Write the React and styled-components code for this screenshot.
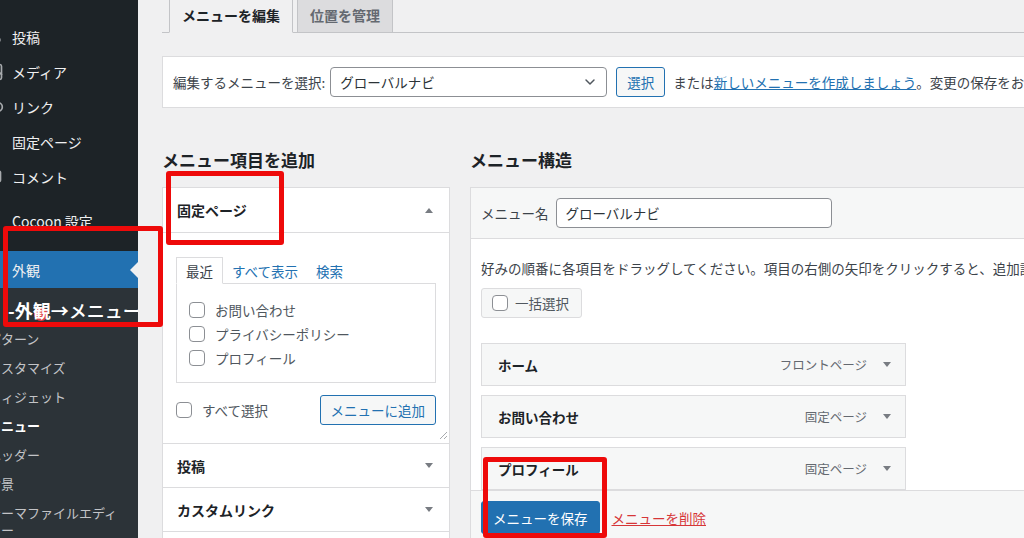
import React from "react"
import styled, { createGlobalStyle, css } from "styled-components"
import { Pin, Image, Link2, File, MessageSquare, ChevronDown } from "lucide-react"

const GlobalStyle = createGlobalStyle`
  html, body {
    margin: 0;
    padding: 0;
  }
  body {
    background: #f0f0f1;
    font-family: "Noto Sans CJK JP", "Noto Sans", sans-serif;
    font-size: 13.5px;
    color: #3c434a;
    overflow: hidden;
  }
  * {
    box-sizing: border-box;
  }
`

const Page = styled.div`
  position: relative;
  display: flex;
  width: 1024px;
  height: 538px;
  overflow: hidden;
`

/* ---------- admin sidebar ---------- */

const Sidebar = styled.nav`
  position: relative;
  flex: 0 0 138px;
  height: 100%;
  background: #1d2327;
  overflow: hidden;
`

// the screenshot is cropped on the left, so the menu sits 24px outside
const MenuList = styled.ul`
  width: 162px;
  margin: 0 0 0 -24px;
  padding: 19px 0 0;
  list-style: none;
`

const MenuItem = styled.li`
  position: relative;
  display: flex;
  align-items: center;
  height: ${p => (p.$current ? 37 : 35)}px;
  font-size: 14px;
  color: #f0f0f1;
  background: ${p => (p.$current ? "#2271b1" : "transparent")};
  white-space: nowrap;

  ${p =>
    p.$current &&
    css`
      &::after {
        content: "";
        position: absolute;
        right: 0;
        top: 50%;
        margin-top: -8px;
        border: 8px solid transparent;
        border-right-color: #f0f0f1;
        border-left-width: 0;
      }
    `}
`

const MenuIcon = styled.span`
  flex: 0 0 36px;
  display: flex;
  justify-content: center;
  color: #a7aaad;
`

const Separator = styled.li`
  height: ${p => p.$h}px;
`

const SubMenu = styled.ul`
  margin: 0;
  padding: 6px 0 8px;
  list-style: none;
  background: #2c3338;
`

const SubItem = styled.li`
  padding: 6px 12px;
  line-height: 17px;
  font-size: 13px;
  color: ${p => (p.$current ? "#ffffff" : "#c3c4c7")};
  font-weight: ${p => (p.$current ? 700 : 400)};
`

// hand-written note laid over the first sub item
const CalloutItem = styled.li`
  position: relative;
  display: flex;
  align-items: center;
  height: 30px;
  padding: 2px 0 0 32px;
  color: #fff;
  font-size: 18px;
  font-weight: 700;
  white-space: nowrap;
`

const CalloutDot = styled.span`
  position: absolute;
  left: 58px;
  top: 13px;
  width: 14px;
  height: 14px;
  border-radius: 50%;
  background: #e0474c;
`

const CalloutText = styled.span`
  position: relative;
  font-weight: ${p => (p.$light ? 500 : 700)};
`

/* ---------- main area ---------- */

const Main = styled.main`
  flex: 1;
  min-width: 0;
  overflow: hidden;
  padding-left: 24px;
`

const Wrap = styled.div`
  width: 1100px;
`

const TabBar = styled.div`
  display: flex;
  align-items: flex-end;
  gap: 4px;
  height: 37px;
  margin-top: -4px;
  padding-left: 7px;
  border-bottom: 1px solid #c3c4c7;
`

const Tab = styled.div`
  height: 37px;
  margin-bottom: -1px;
  padding: 0 12px;
  display: flex;
  align-items: center;
  font-size: 14px;
  font-weight: 700;
  border: 1px solid #c3c4c7;
  border-bottom-color: ${p => (p.$active ? "#f0f0f1" : "#c3c4c7")};
  background: ${p => (p.$active ? "#f0f0f1" : "#dcdcde")};
  color: ${p => (p.$active ? "#1d2327" : "#646970")};
`

const ManageBox = styled.div`
  display: flex;
  align-items: center;
  height: 52px;
  margin-top: 23px;
  padding: 0 10px;
  background: #fff;
  border: 1px solid #dcdcde;
  white-space: nowrap;
`

const Label = styled.span`
  margin-left: ${p => p.$ml || 0}px;
  margin-right: ${p => p.$gap || 0}px;
  color: #3c434a;
`

const SelectBox = styled.div`
  display: flex;
  align-items: center;
  justify-content: space-between;
  width: 277px;
  height: 30px;
  padding: 0 8px 0 9px;
  border: 1px solid #8c8f94;
  border-radius: 4px;
  background: #fff;
  color: #2c3338;
`

const SecondaryButton = styled.button`
  height: 30px;
  margin-left: ${p => p.$ml || 0}px;
  padding: 0 10px;
  font: inherit;
  color: #2271b1;
  background: #f6f7f7;
  border: 1px solid #2271b1;
  border-radius: 3px;
`

const Link = styled.a`
  color: ${p => (p.$danger ? "#d63638" : "#2271b1")};
  text-decoration: underline;
  margin-left: ${p => p.$ml || 0}px;
`

const Columns = styled.div`
  display: flex;
  gap: 20px;
  margin-top: 40px;
`

const Column = styled.div`
  flex: ${p => (p.$fixed ? "0 0 288px" : "1")};
`

const Heading = styled.h2`
  margin: 0 0 15px;
  font-size: 17px;
  line-height: 24px;
  font-weight: 700;
  color: #1d2327;
`

/* ---------- left: add menu items ---------- */

const Accordion = styled.div`
  background: #fff;
  border: 1px solid #dcdcde;
`

const SectionHeader = styled.div`
  display: flex;
  align-items: center;
  justify-content: space-between;
  height: 44px;
  padding: 0 16px 0 14px;
  border-bottom: 1px solid #dcdcde;
  font-size: 14px;
  font-weight: 700;
  color: #1d2327;

  &:first-child {
    height: 45px;
  }
`

const Arrow = styled.span`
  width: 0;
  height: 0;
  border-left: 4px solid transparent;
  border-right: 4px solid transparent;
  ${p =>
    p.$up
      ? css`border-bottom: 5px solid #787c82;`
      : css`border-top: 5px solid #787c82;`}
`

const SectionBody = styled.div`
  position: relative;
  padding: 24px 13px 18px;
  border-bottom: 1px solid #dcdcde;
`

const InnerTabs = styled.div`
  display: flex;
  align-items: flex-end;
  height: 26px;
`

const InnerTab = styled.span`
  position: relative;
  z-index: 1;
  display: flex;
  align-items: center;
  height: 27px;
  margin-bottom: -1px;
  padding: 0 9px;
  color: ${p => (p.$active ? "#3c434a" : "#2271b1")};
  ${p =>
    p.$active &&
    css`
      background: #fff;
      border: 1px solid #dcdcde;
      border-bottom-color: #fff;
    `}
`

const Panel = styled.div`
  height: 100px;
  padding: 14px 12px;
  border: 1px solid #dcdcde;
`

const CheckRow = styled.label`
  display: flex;
  align-items: center;
  gap: 10px;
  height: 24px;
  color: #50575e;
`

const Checkbox = styled.span`
  flex: 0 0 16px;
  width: 16px;
  height: 16px;
  border: 1px solid #8c8f94;
  border-radius: 4px;
  background: #fff;
`

const ActionRow = styled.div`
  display: flex;
  align-items: center;
  justify-content: space-between;
  margin-top: 12px;
`

const Resize = styled.svg`
  position: absolute;
  right: 2px;
  bottom: 4px;
`

/* ---------- right: menu structure ---------- */

const StructureBox = styled.div`
  background: #fff;
  border: 1px solid #dcdcde;
`

const NameBar = styled.div`
  display: flex;
  align-items: center;
  height: 51px;
  padding: 0 10px;
  background: #f6f7f7;
  border-bottom: 1px solid #dcdcde;
`

const TextInput = styled.div`
  display: flex;
  align-items: center;
  width: 276px;
  height: 30px;
  padding-left: 9px;
  border: 1px solid #8c8f94;
  border-radius: 4px;
  background: #fff;
  color: #2c3338;
`

const StructureBody = styled.div`
  padding: 0 10px;
`

const Instructions = styled.p`
  margin: 19px 0 10px;
  line-height: 20px;
  white-space: nowrap;
  color: #3c434a;
`

const BulkButton = styled.div`
  display: inline-flex;
  align-items: center;
  gap: 7px;
  height: 30px;
  padding: 0 12px 0 10px;
  background: #f6f7f7;
  border: 1px solid #dcdcde;
  border-radius: 3px;
  color: #50575e;
`

const ItemList = styled.div`
  margin-top: 25px;
`

const MenuBar = styled.div`
  display: flex;
  align-items: center;
  width: 425px;
  height: 43px;
  margin-bottom: 9px;
  padding: 0 14px 0 16px;
  background: #f6f7f7;
  border: 1px solid #dcdcde;

  &:last-child {
    margin-bottom: 0;
  }
`

const ItemTitle = styled.span`
  flex: 1;
  font-weight: 700;
  color: #1d2327;
`

const ItemType = styled.span`
  margin-right: 16px;
  font-size: 12.5px;
  color: #646970;
`

const Footer = styled.div`
  display: flex;
  align-items: center;
  padding: 10px 10px;
  background: #f6f7f7;
  border-top: 1px solid #dcdcde;
`

const PrimaryButton = styled.button`
  height: 33px;
  padding: 0 11px;
  font: inherit;
  color: #fff;
  background: #2271b1;
  border: 1px solid #2271b1;
  border-radius: 3px;
`

/* ---------- red annotation frames ---------- */

const RedFrame = styled.div`
  position: absolute;
  left: ${p => p.$x}px;
  top: ${p => p.$y}px;
  width: ${p => p.$w}px;
  height: ${p => p.$h}px;
  border: 5px solid #ee0a0a;
  border-radius: 3px;
  pointer-events: none;
`

const mainMenu = [
  { label: "投稿", icon: Pin, size: 20 },
  { label: "メディア", icon: Image, size: 20 },
  { label: "リンク", icon: Link2, size: 20 },
  { label: "固定ページ", icon: File, size: 16 },
  { label: "コメント", icon: MessageSquare, size: 16 },
]

const appearanceSub = [
  "パターン",
  "カスタマイズ",
  "ウィジェット",
  "メニュー",
  "ヘッダー",
  "背景",
  "テーマファイルエディター",
]

const recentPages = ["お問い合わせ", "プライバシーポリシー", "プロフィール"]

const menuItems = [
  { title: "ホーム", type: "フロントページ" },
  { title: "お問い合わせ", type: "固定ページ" },
  { title: "プロフィール", type: "固定ページ" },
]

const App = () => {
  return (
    <>
      <GlobalStyle />
      <Page>
        <Sidebar>
          <MenuList>
            {mainMenu.map(({ label, icon: Icon, size }) => (
              <MenuItem key={label}>
                <MenuIcon>
                  <Icon size={size} strokeWidth={2} />
                </MenuIcon>
                {label}
              </MenuItem>
            ))}
            <Separator $h={9} />
            <MenuItem>
              <MenuIcon />
              Cocoon 設定
            </MenuItem>
            <Separator $h={13} />
            <MenuItem $current>
              <MenuIcon />
              外観
            </MenuItem>
            <SubMenu>
              <CalloutItem>
                <CalloutDot />
                <CalloutText>-外観→</CalloutText>
                <CalloutText $light>メニュー</CalloutText>
              </CalloutItem>
              {appearanceSub.map(s => (
                <SubItem key={s} $current={s === "メニュー"}>
                  {s}
                </SubItem>
              ))}
            </SubMenu>
          </MenuList>
        </Sidebar>

        <Main>
          <Wrap>
            <TabBar>
              <Tab $active>メニューを編集</Tab>
              <Tab>位置を管理</Tab>
            </TabBar>

            <ManageBox>
              <Label $gap={5}>編集するメニューを選択:</Label>
              <SelectBox>
                グローバルナビ
                <ChevronDown size={16} strokeWidth={2.2} color="#50575e" />
              </SelectBox>
              <SecondaryButton $ml={9}>選択</SecondaryButton>
              <Label $ml={8}>または</Label>
              <Link>新しいメニューを作成しましょう</Link>
              <Label>。変更の保存をお忘れなく！</Label>
            </ManageBox>

            <Columns>
              <Column $fixed>
                <Heading>メニュー項目を追加</Heading>
                <Accordion>
                  <SectionHeader>
                    固定ページ
                    <Arrow $up />
                  </SectionHeader>
                  <SectionBody>
                    <InnerTabs>
                      <InnerTab $active>最近</InnerTab>
                      <InnerTab>すべて表示</InnerTab>
                      <InnerTab>検索</InnerTab>
                    </InnerTabs>
                    <Panel>
                      {recentPages.map(p => (
                        <CheckRow key={p}>
                          <Checkbox />
                          {p}
                        </CheckRow>
                      ))}
                    </Panel>
                    <ActionRow>
                      <CheckRow>
                        <Checkbox />
                        すべて選択
                      </CheckRow>
                      <SecondaryButton>メニューに追加</SecondaryButton>
                    </ActionRow>
                    <Resize width="8" height="8" viewBox="0 0 8 8">
                      <path d="M8 1 L1 8 M8 5 L5 8" stroke="#a7aaad" strokeWidth="1" />
                    </Resize>
                  </SectionBody>
                  <SectionHeader>
                    投稿
                    <Arrow />
                  </SectionHeader>
                  <SectionHeader>
                    カスタムリンク
                    <Arrow />
                  </SectionHeader>
                  <SectionHeader>
                    カテゴリー
                    <Arrow />
                  </SectionHeader>
                </Accordion>
              </Column>

              <Column>
                <Heading>メニュー構造</Heading>
                <StructureBox>
                  <NameBar>
                    <Label $gap={7}>メニュー名</Label>
                    <TextInput>グローバルナビ</TextInput>
                  </NameBar>
                  <StructureBody>
                    <Instructions>
                      好みの順番に各項目をドラッグしてください。項目の右側の矢印をクリックすると、追加設定オプションが表示されます。
                    </Instructions>
                    <BulkButton>
                      <Checkbox />
                      一括選択
                    </BulkButton>
                    <ItemList>
                      {menuItems.map(item => (
                        <MenuBar key={item.title}>
                          <ItemTitle>{item.title}</ItemTitle>
                          <ItemType>{item.type}</ItemType>
                          <Arrow />
                        </MenuBar>
                      ))}
                    </ItemList>
                  </StructureBody>
                  <Footer>
                    <PrimaryButton>メニューを保存</PrimaryButton>
                    <Link $danger $ml={12}>
                      メニューを削除
                    </Link>
                  </Footer>
                </StructureBox>
              </Column>
            </Columns>
          </Wrap>
        </Main>

        <RedFrame $x={3} $y={226} $w={160} $h={101} />
        <RedFrame $x={166} $y={171} $w={118} $h={74} />
        <RedFrame $x={483} $y={457} $w={124} $h={81} />
      </Page>
    </>
  )
}

export default App
